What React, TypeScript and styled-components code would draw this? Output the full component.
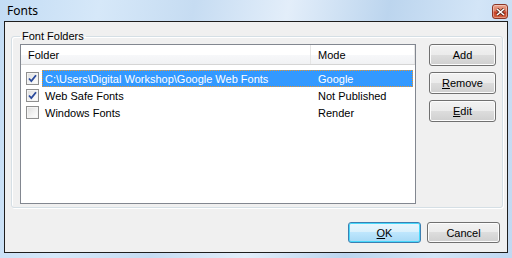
import React from 'react';
import styled, { createGlobalStyle, css } from 'styled-components';

const GlobalStyle = createGlobalStyle`
    html, body {
        margin: 0;
        padding: 0;
        width: 512px;
        height: 258px;
        overflow: hidden;
    }
    body {
        font-family: "Liberation Sans", Arial, sans-serif;
        font-size: 11px;
        color: #000;
    }
`;

const Frame = styled.div`
    width: 512px;
    height: 258px;
    box-sizing: border-box;
    padding: 0 4px 5px 4px;
    display: flex;
    flex-direction: column;
    background: linear-gradient(100deg, #c3dcf4 0%, #d6e8f9 18%, #c6dcf2 35%, #e3eefa 52%, #bcd5ee 70%, #d3e5f7 86%, #c0d8f1 100%);
`;

const TitleBar = styled.div`
    height: 21px;
    display: flex;
    align-items: center;
    justify-content: space-between;
    padding: 0 0 0 3px;
`;

const Title = styled.span`
    font-family: "Noto Sans", "DejaVu Sans", sans-serif;
    font-size: 12px;
    color: #000;
    margin-top: -1px;
`;

const CloseButton = styled.div`
    width: 16px;
    height: 15px;
    box-sizing: border-box;
    margin-top: 2px;
    border: 1px solid #8a3526;
    border-radius: 3px;
    background: linear-gradient(#eba48f 0%, #dd7d63 45%, #c74128 55%, #d4623f 100%);
    display: flex;
    align-items: center;
    justify-content: center;
    box-shadow: inset 0 0 0 1px rgba(255, 255, 255, 0.35);
`;

const Client = styled.div`
    flex: 1;
    display: flex;
    flex-direction: column;
    border: 1px solid #1e1e1e;
    background: #f0f0f0;
    padding: 7px 4px 10px 6px;
    min-height: 0;
`;

const GroupBox = styled.fieldset`
    margin: 0;
    padding: 1px 6px 3px 8px;
    border: 1px solid #d5dfe5;
    border-radius: 3px;
    box-shadow: inset 1px 1px 0 #fff, 1px 1px 0 #fff;
    display: flex;
    gap: 13px;
    min-width: 0;
`;

const GroupLabel = styled.legend`
    margin-left: 0;
    padding: 0 2px;
    line-height: 14px;
    height: 14px;
    color: #000;
`;

const ListView = styled.div`
    flex: 1;
    height: 160px;
    box-sizing: border-box;
    border: 1px solid #828790;
    background: #fff;
    display: flex;
    flex-direction: column;
`;

const Header = styled.div`
    height: 20px;
    box-sizing: border-box;
    display: flex;
    background: linear-gradient(#ffffff 0%, #ffffff 50%, #f7f8fa 51%, #f1f2f4 100%);
    border-bottom: 1px solid #d5d5d5;
`;

const HeaderCell = styled.div<{ $width?: number }>`
    ${({ $width }) => ($width ? css`width: ${$width}px;` : css`flex: 1;`)}
    box-sizing: border-box;
    padding-left: 7px;
    display: flex;
    align-items: center;
    border-right: 1px solid #e5e5e5;
`;

const Rows = styled.div`
    padding-top: 5px;
    display: flex;
    flex-direction: column;
`;

const Row = styled.div`
    height: 17px;
    display: flex;
    align-items: center;
    padding-left: 5px;
    padding-right: 2px;
`;

const Check = styled.span`
    width: 13px;
    height: 13px;
    box-sizing: border-box;
    border: 1px solid #8f8f8f;
    background: linear-gradient(135deg, #dcdcdc 0%, #f4f4f4 60%, #ffffff 100%);
    box-shadow: inset 0 0 0 1px #f4f4f4;
    display: flex;
    align-items: center;
    justify-content: center;
    flex-shrink: 0;
`;

const Item = styled.div<{ $selected?: boolean }>`
    margin-left: 3px;
    flex: 1;
    height: 17px;
    box-sizing: border-box;
    display: flex;
    align-items: center;
    ${({ $selected }) =>
        $selected &&
        css`
            background: #3399ff;
            color: #fff;
            border: 1px dotted #e8952e;
        `}
    ${({ $selected }) => !$selected && css`border: 1px solid transparent;`}
`;

const FolderCell = styled.span`
    width: 268px;
    padding-left: 2px;
    box-sizing: border-box;
    white-space: nowrap;
    overflow: hidden;
`;

const ModeCell = styled.span`
    padding-left: 7px;
    white-space: nowrap;
`;

const SideButtons = styled.div`
    display: flex;
    flex-direction: column;
    gap: 6px;
`;

const Button = styled.button<{ $default?: boolean; $wide?: number }>`
    width: ${({ $wide }) => $wide ?? 67}px;
    height: ${({ $default, $wide }) => ($wide ? 21 : 22)}px;
    padding: 0;
    margin: 0;
    font-family: "Liberation Sans", Arial, sans-serif;
    font-size: 11px;
    color: #000;
    border: 1px solid #707070;
    border-radius: 3px;
    background: linear-gradient(#f2f2f2 0%, #ebebeb 49%, #dddddd 50%, #cfcfcf 100%);
    box-shadow: inset 0 0 0 1px #fcfcfc;
    ${({ $default }) =>
        $default &&
        css`
            border-color: #3c7fb1;
            background: linear-gradient(#eaf6fd 0%, #d9f0fc 49%, #bee6fd 50%, #a7d9f5 100%);
            box-shadow: inset 0 0 0 1px #48d8fb;
        `}
`;

const Mnemonic = styled.u`
    text-decoration: underline;
    text-underline-offset: 1px;
`;

const Footer = styled.div`
    margin-top: 14px;
    display: flex;
    justify-content: flex-end;
    gap: 6px;
    padding-right: 3px;
`;

const folders = [
    { name: 'C:\\Users\\Digital Workshop\\Google Web Fonts', mode: 'Google', checked: true, selected: true },
    { name: 'Web Safe Fonts', mode: 'Not Published', checked: true, selected: false },
    { name: 'Windows Fonts', mode: 'Render', checked: false, selected: false },
];

function CheckMark() {
    return (
        <svg width="9" height="9" viewBox="0 0 9 9">
            <path d="M1 4.5 L3.3 7 L8 1.2" fill="none" stroke="#2a4a9c" strokeWidth="1.8" />
        </svg>
    );
}

export default function App(): JSX.Element {
    return (
        <>
            <GlobalStyle />
            <Frame>
                <TitleBar>
                    <Title>Fonts</Title>
                    <CloseButton>
                        <svg width="9" height="8" viewBox="0 0 9 8">
                            <path d="M1 1 L8 7 M8 1 L1 7" stroke="#5a2418" strokeWidth="3" />
                            <path d="M1 1 L8 7 M8 1 L1 7" stroke="#fff" strokeWidth="1.6" />
                        </svg>
                    </CloseButton>
                </TitleBar>
                <Client>
                    <GroupBox>
                        <GroupLabel>Font Folders</GroupLabel>
                        <ListView>
                            <Header>
                                <HeaderCell $width={290}>Folder</HeaderCell>
                                <HeaderCell>Mode</HeaderCell>
                            </Header>
                            <Rows>
                                {folders.map((f) => (
                                    <Row key={f.name}>
                                        <Check>{f.checked && <CheckMark />}</Check>
                                        <Item $selected={f.selected}>
                                            <FolderCell>{f.name}</FolderCell>
                                            <ModeCell>{f.mode}</ModeCell>
                                        </Item>
                                    </Row>
                                ))}
                            </Rows>
                        </ListView>
                        <SideButtons>
                            <Button>Add</Button>
                            <Button>
                                <Mnemonic>R</Mnemonic>emove
                            </Button>
                            <Button>
                                <Mnemonic>E</Mnemonic>dit
                            </Button>
                        </SideButtons>
                    </GroupBox>
                    <Footer>
                        <Button $default $wide={73}>
                            <Mnemonic>O</Mnemonic>K
                        </Button>
                        <Button $wide={73}>Cancel</Button>
                    </Footer>
                </Client>
            </Frame>
        </>
    );
}
